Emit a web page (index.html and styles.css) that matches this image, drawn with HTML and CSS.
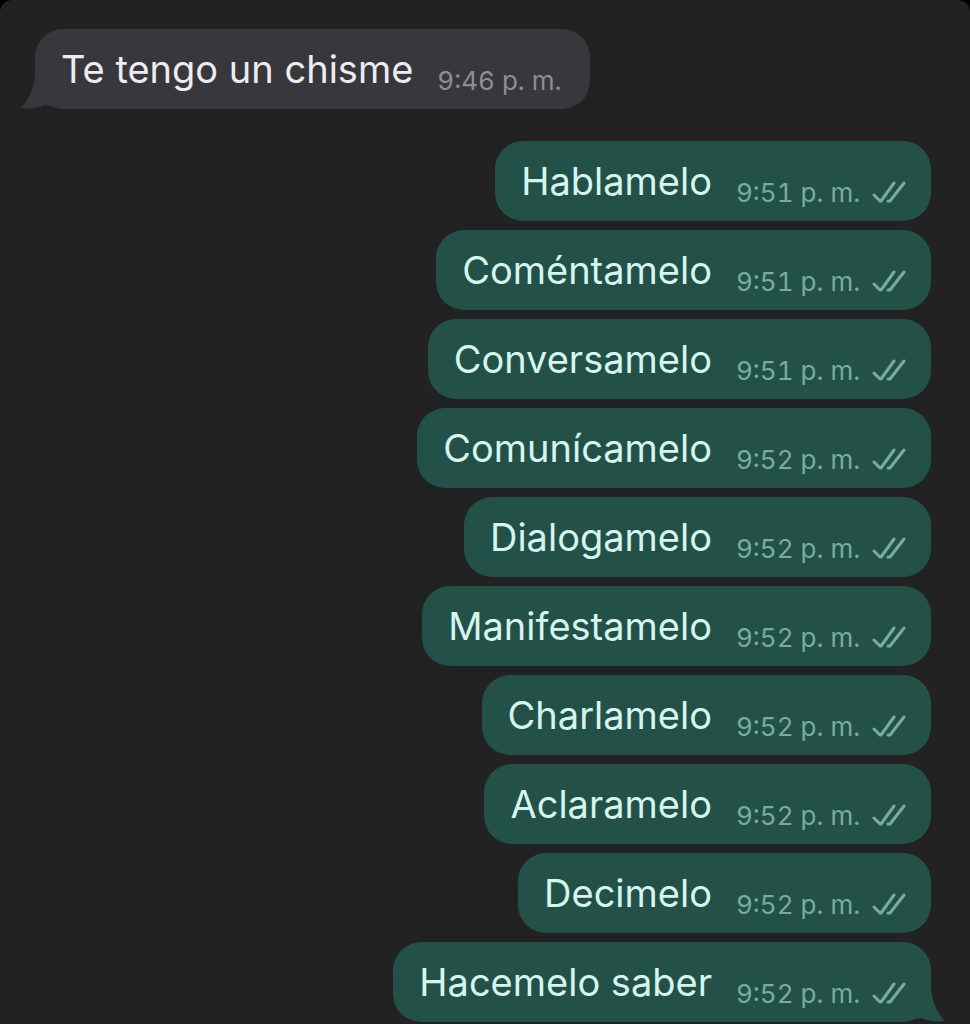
FILE: index.html
```html
<!DOCTYPE html>
<html lang="es">
<head>
    <meta charset="UTF-8">
    <meta name="viewport" content="width=device-width, initial-scale=1.0">
    <title>Chat</title>
    <link rel="stylesheet" href="styles.css">
</head>
<body>
    <svg class="sprite" aria-hidden="true">
        <symbol id="checks" viewBox="0 0 34 22">
            <path d="M2 14 L8 20 L9 20 L22 2 M16 20 L18 20 L32 2" />
        </symbol>
        <symbol id="tail" viewBox="0 0 28 44">
            <path d="M14 0 C15 18 10 33 0 43 C10 44 18 43 24 40 L28 41 V0 Z" />
        </symbol>
    </svg>

    <main class="chat">
        <div class="message received">
            <svg class="tail"><use href="#tail" /></svg>
            <p class="message-text">Te tengo un chisme</p>
            <time class="message-time">9:46 p. m.</time>
        </div>

        <div class="message sent">
            <p class="message-text">Hablamelo</p>
            <time class="message-time">9:51 p. m.</time>
            <svg class="checks" role="img" aria-label="Entregado"><use href="#checks" /></svg>
        </div>
        <div class="message sent">
            <p class="message-text">Coméntamelo</p>
            <time class="message-time">9:51 p. m.</time>
            <svg class="checks" role="img" aria-label="Entregado"><use href="#checks" /></svg>
        </div>
        <div class="message sent">
            <p class="message-text">Conversamelo</p>
            <time class="message-time">9:51 p. m.</time>
            <svg class="checks" role="img" aria-label="Entregado"><use href="#checks" /></svg>
        </div>
        <div class="message sent">
            <p class="message-text">Comunícamelo</p>
            <time class="message-time">9:52 p. m.</time>
            <svg class="checks" role="img" aria-label="Entregado"><use href="#checks" /></svg>
        </div>
        <div class="message sent">
            <p class="message-text">Dialogamelo</p>
            <time class="message-time">9:52 p. m.</time>
            <svg class="checks" role="img" aria-label="Entregado"><use href="#checks" /></svg>
        </div>
        <div class="message sent">
            <p class="message-text">Manifestamelo</p>
            <time class="message-time">9:52 p. m.</time>
            <svg class="checks" role="img" aria-label="Entregado"><use href="#checks" /></svg>
        </div>
        <div class="message sent">
            <p class="message-text">Charlamelo</p>
            <time class="message-time">9:52 p. m.</time>
            <svg class="checks" role="img" aria-label="Entregado"><use href="#checks" /></svg>
        </div>
        <div class="message sent">
            <p class="message-text">Aclaramelo</p>
            <time class="message-time">9:52 p. m.</time>
            <svg class="checks" role="img" aria-label="Entregado"><use href="#checks" /></svg>
        </div>
        <div class="message sent">
            <p class="message-text">Decimelo</p>
            <time class="message-time">9:52 p. m.</time>
            <svg class="checks" role="img" aria-label="Entregado"><use href="#checks" /></svg>
        </div>
        <div class="message sent">
            <svg class="tail"><use href="#tail" /></svg>
            <p class="message-text">Hacemelo saber</p>
            <time class="message-time">9:52 p. m.</time>
            <svg class="checks" role="img" aria-label="Entregado"><use href="#checks" /></svg>
        </div>
    </main>
</body>
</html>
```
FILE: styles.css
```css
html {
    background-color: #000000;
}

body {
    margin: 0;
    font-family: Inter, "Liberation Sans", sans-serif;
}

.sprite {
    display: none;
}

.chat {
    display: flex;
    flex-direction: column;
    gap: 9px;
    box-sizing: border-box;
    min-height: 100vh;
    padding: 29px 39px 3px 35px;
    background-color: #222222;
    border-radius: 12px 12px 0 0;
}

.message {
    display: flex;
    align-items: flex-end;
    position: relative;
    box-sizing: border-box;
    min-height: 80px;
    padding: 16px 25px 12px 26px;
    border-radius: 28px;
}

.received {
    align-self: flex-start;
    margin-bottom: 23px;
    background-color: #38373c;
    color: #ececf1;
}

.sent {
    align-self: flex-end;
    background-color: #235047;
    color: #d5f5ee;
}

.message-text {
    margin: 0 24px 4px 0;
    font-size: 38px;
    line-height: 48px;
}

.message-time {
    min-width: 128px;
    font-size: 26px;
    font-variant-numeric: tabular-nums;
    line-height: 32px;
    color: #8e8d93;
}

.sent .message-time {
    color: #79aca0;
}

.checks {
    width: 34px;
    height: 22px;
    margin: 0 0 6px 8px;
    fill: none;
    stroke: #79aca0;
    stroke-width: 3;
    stroke-linecap: round;
    stroke-linejoin: round;
}

.tail {
    position: absolute;
    bottom: 0;
    left: -14px;
    width: 28px;
    height: 44px;
    fill: #38373c;
}

.sent .tail {
    right: -14px;
    left: auto;
    fill: #235047;
    transform: scaleX(-1);
}
```
